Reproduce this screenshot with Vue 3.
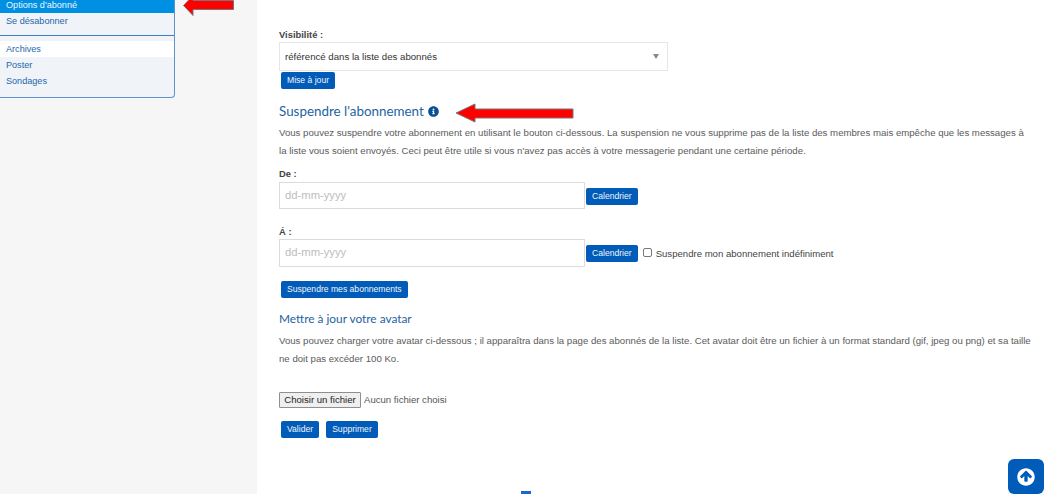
<script setup>
const sideTop = ["Options d'abonné", 'Se désabonner']
const sideBottom = ['Archives', 'Poster', 'Sondages']
</script>

<template>
  <div class="page">
    <aside class="side">
      <nav class="menu">
        <a v-for="(item, i) in sideTop" :key="item" class="item" :class="{ active: i === 0 }">{{ item }}</a>
        <div class="divider"></div>
        <a v-for="(item, i) in sideBottom" :key="item" class="item" :class="{ white: i === 0 }">{{ item }}</a>
      </nav>
      <svg class="arrow arrow-side" width="54" height="20" viewBox="0 0 54 20">
        <path d="M1.5 5.5 L11 -4.5 V0.5 H51.5 V9.5 H11 V15.5 Z" fill="#f00" stroke="#777" stroke-width="1" />
      </svg>
    </aside>
    <main class="main">
      <label class="label first">Visibilité :</label>
      <div class="select">
        <span>référencé dans la liste des abonnés</span>
        <i class="caret"></i>
      </div>
      <button class="btn update">Mise à jour</button>

      <h2 class="title suspend">Suspendre l'abonnement
        <svg class="info" width="11" height="11" viewBox="0 0 512 512">
          <path fill="#0b4f96" d="M256 8C119 8 8 119 8 256s111 248 248 248 248-111 248-248S393 8 256 8zm0 110c23 0 42 19 42 42s-19 42-42 42-42-19-42-42 19-42 42-42zm56 254c0 7-5 12-12 12h-88c-7 0-12-5-12-12v-24c0-7 5-12 12-12h12v-64h-12c-7 0-12-5-12-12v-24c0-7 5-12 12-12h64c7 0 12 5 12 12v100h12c7 0 12 5 12 12v24z" />
        </svg>
      </h2>
      <svg class="arrow arrow-main" width="120" height="20" viewBox="0 0 120 20">
        <path d="M1 10 L20 1 V6 H118 V15 H20 V19 Z" fill="#f00" stroke="#777" stroke-width="1" />
      </svg>
      <p class="text">Vous pouvez suspendre votre abonnement en utilisant le bouton ci-dessous. La suspension ne vous supprime pas de la liste des membres mais empêche que les messages à la liste vous soient envoyés. Ceci peut être utile si vous n'avez pas accès à votre messagerie pendant une certaine période.</p>

      <label class="label from">De :</label>
      <div class="date-row">
        <div class="date-input">dd-mm-yyyy</div>
        <button class="btn cal">Calendrier</button>
      </div>
      <label class="label to">Á :</label>
      <div class="date-row">
        <div class="date-input tall">dd-mm-yyyy</div>
        <button class="btn cal">Calendrier</button>
        <span class="check"></span>
        <span class="check-label">Suspendre mon abonnement indéfiniment</span>
      </div>
      <button class="btn suspend-btn">Suspendre mes abonnements</button>

      <h2 class="title avatar">Mettre à jour votre avatar</h2>
      <p class="text avatar-text">Vous pouvez charger votre avatar ci-dessous ; il apparaîtra dans la page des abonnés de la liste. Cet avatar doit être un fichier à un format standard (gif, jpeg ou png) et sa taille ne doit pas excéder 100 Ko.</p>

      <div class="file-row">
        <button class="file-btn">Choisir un fichier</button>
        <span class="file-name">Aucun fichier choisi</span>
      </div>
      <div class="actions">
        <button class="btn">Valider</button>
        <button class="btn">Supprimer</button>
      </div>
    </main>
    <div class="tick"></div>
    <button class="top" aria-label="Haut de page">
      <svg width="18" height="18" viewBox="0 0 512 512">
        <path fill="#fff" d="M8 256C8 119 119 8 256 8s248 111 248 248-111 248-248 248S8 393 8 256zm143 29 57-59v142c0 13 11 24 24 24h48c13 0 24-11 24-24V226l57 59c9 10 25 10 34 0l22-22c9-9 9-25 0-34L273 85c-9-9-25-9-34 0L95 229c-9 9-9 25 0 34l22 22c9 10 25 10 34 0z" />
      </svg>
    </button>
  </div>
</template>

<style scoped>
.page {
  position: relative;
  display: flex;
  width: 1052px;
  height: 494px;
  overflow: hidden;
  background: #fff;
  font-family: "Liberation Sans", Arial, sans-serif;
  font-size: 9.6px;
  color: #555;
}
.side {
  position: relative;
  flex: 0 0 257px;
  background: #f6f6f6;
}
.menu {
  display: flex;
  flex-direction: column;
  box-sizing: border-box;
  width: 175px;
  height: 98px;
  background: #f0f4f8;
  border-right: 1px solid #5b93d0;
  border-bottom: 1px solid #5b93d0;
  border-bottom-right-radius: 4px;
  font-size: 9.1px;
}
.item {
  height: 16px;
  padding-left: 6px;
  line-height: 16px;
  color: #1f66ab;
}
.item.active {
  height: 13px;
  line-height: 11px;
  background: #0090e3;
  color: #eaf5fc;
}
.item.white {
  background: #fff;
}
.divider {
  height: 0;
  margin: 6px 0 5px;
  border-top: 1px solid #3f7fbd;
}
.arrow {
  position: absolute;
  overflow: visible;
}
.arrow-side {
  left: 182px;
  top: 0;
}
.main {
  position: relative;
  flex: 1;
  padding-left: 22px;
  width: 0;
}
.label {
  display: block;
  height: 12px;
  line-height: 12px;
  font-size: 9.4px;
  font-weight: 700;
  color: #444;
}
.label.first {
  margin-top: 29px;
  margin-bottom: 1px;
}
.select {
  box-sizing: border-box;
  display: flex;
  align-items: center;
  justify-content: space-between;
  width: 389px;
  height: 29px;
  padding: 0 8px 0 5px;
  border: 1px solid #e6e6e6;
  font-size: 9.65px;
  color: #333;
}
.caret {
  width: 0;
  height: 0;
  border-left: 3px solid transparent;
  border-right: 3px solid transparent;
  border-top: 5px solid #888;
}
.btn {
  box-sizing: border-box;
  height: 17px;
  padding: 0 6px;
  border: 0;
  border-radius: 2px;
  background: #005cb8;
  color: #f0f5fb;
  font: 8.6px/17px "Liberation Sans", Arial, sans-serif;
  display: block;
}
.update {
  margin: 1px 0 0 2px;
}
.title {
  margin: 0;
  font-family: Lato, "Open Sans", sans-serif;
  font-weight: 400;
  color: #1e639f;
  display: flex;
  align-items: center;
  gap: 4px;
}
.suspend {
  margin-top: 14px;
  height: 16px;
  font-size: 13.4px;
}
.arrow-main {
  left: 198px;
  top: 103px;
}
.text {
  margin: 0;
  width: 753px;
  font-size: 9.63px;
  line-height: 18px;
  color: #5b5b5b;
}
.suspend + .arrow + .text {
  margin-top: 5px;
}
.label.from {
  margin-top: 8px;
  margin-bottom: 2px;
}
.label.to {
  margin-top: 17px;
  margin-bottom: 1px;
}
.date-row {
  display: flex;
  align-items: center;
  gap: 1px;
}
.date-input {
  box-sizing: border-box;
  width: 306px;
  height: 27px;
  padding-left: 5px;
  border: 1px solid #dcdcdc;
  line-height: 25px;
  font-size: 11.25px;
  color: #bcbcbc;
}
.date-input.tall {
  height: 28px;
}
.cal {
  margin-top: 1px;
}
.check {
  box-sizing: border-box;
  width: 9px;
  height: 9px;
  margin: -1px 0 0 4px;
  border: 1px solid #767676;
  border-radius: 2px;
  background: #fff;
}
.check-label {
  margin-left: 3px;
  font-size: 9.58px;
  color: #444;
}
.suspend-btn {
  margin: 14px 0 0 2px;
}
.avatar {
  margin-top: 12.5px;
  height: 16px;
  font-size: 11.87px;
}
.avatar-text {
  margin-top: 5px;
}
.file-row {
  display: flex;
  align-items: center;
  gap: 3px;
  margin-top: 24px;
}
.file-btn {
  box-sizing: border-box;
  width: 82px;
  height: 16px;
  padding: 0;
  border: 1px solid #8f8f8f;
  border-radius: 1px;
  background: #efefef;
  color: #222;
  font: 9.6px/14px "Liberation Sans", Arial, sans-serif;
}
.file-name {
  font-size: 9.6px;
  color: #555;
}
.actions {
  display: flex;
  gap: 7px;
  margin: 13px 0 0 2px;
}
.tick {
  position: absolute;
  left: 521px;
  top: 491px;
  width: 10px;
  height: 3px;
  background: #1a66d0;
}
.top {
  position: absolute;
  left: 1008px;
  top: 459px;
  width: 36px;
  height: 35px;
  display: flex;
  align-items: center;
  justify-content: center;
  padding: 0;
  border: 0;
  border-radius: 6px;
  background: #005cb8;
}
</style>
